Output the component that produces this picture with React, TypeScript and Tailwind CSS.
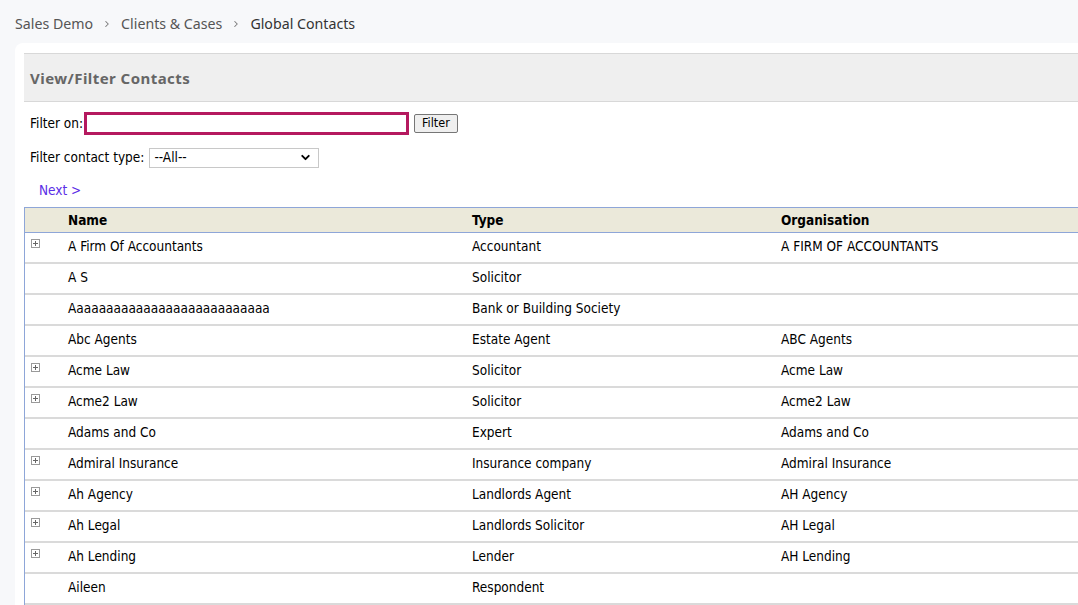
import { ChevronRight, ChevronDown } from "lucide-react";

type Contact = { name: string; type: string; org: string; expandable: boolean };

const CONTACTS: Contact[] = [
  { name: "A Firm Of Accountants", type: "Accountant", org: "A FIRM OF ACCOUNTANTS", expandable: true },
  { name: "A S", type: "Solicitor", org: "", expandable: false },
  { name: "A" + "a".repeat(26), type: "Bank or Building Society", org: "", expandable: false },
  { name: "Abc Agents", type: "Estate Agent", org: "ABC Agents", expandable: false },
  { name: "Acme Law", type: "Solicitor", org: "Acme Law", expandable: true },
  { name: "Acme2 Law", type: "Solicitor", org: "Acme2 Law", expandable: true },
  { name: "Adams and Co", type: "Expert", org: "Adams and Co", expandable: false },
  { name: "Admiral Insurance", type: "Insurance company", org: "Admiral Insurance", expandable: true },
  { name: "Ah Agency", type: "Landlords Agent", org: "AH Agency", expandable: true },
  { name: "Ah Legal", type: "Landlords Solicitor", org: "AH Legal", expandable: true },
  { name: "Ah Lending", type: "Lender", org: "AH Lending", expandable: true },
  { name: "Aileen", type: "Respondent", org: "", expandable: false },
];

const legacy = { fontFamily: 'Tahoma, "DejaVu Sans Condensed", "DejaVu Sans", sans-serif' };
const ui = { fontFamily: '"Noto Sans", "Open Sans", sans-serif' };

// little boxed plus used to open a contact's sub rows
function ExpandBox() {
  return (
    <svg width="9" height="9" viewBox="0 0 9 9" className="block">
      <rect x="0.5" y="0.5" width="8" height="8" fill="#fff" stroke="#9a9a9a" />
      <path d="M2 4.5h5M4.5 2v5" stroke="#666" strokeWidth="1" />
    </svg>
  );
}

export default function App() {
  return (
    <div className="w-[1078px] h-[605px] overflow-hidden bg-[#f7f8fa] flex flex-col">
      {/* Breadcrumb */}
      <nav className="h-[43px] shrink-0 flex items-center pl-[15px] pt-[4px] text-[14.2px] text-[#555]" style={ui}>
        <span>Sales Demo</span>
        <ChevronRight size={10} strokeWidth={2.5} className="mx-[9px] text-[#777]" />
        <span>Clients &amp; Cases</span>
        <ChevronRight size={10} strokeWidth={2.5} className="mx-[9px] text-[#777]" />
        <span className="text-[#333]">Global Contacts</span>
      </nav>

      <div className="flex-1 ml-[15px] bg-white rounded-tl-lg pl-[9px] pt-[10px] overflow-hidden">
        <div className="w-[1120px]">
          {/* Section header */}
          <div className="h-[49px] bg-[#efefef] border-y border-[#d8d8d8] flex items-center pl-[6px] pt-[2px]">
            <h1 className="text-[15px] font-bold text-[#666] tracking-[0.45px]" style={ui}>
              View/Filter Contacts
            </h1>
          </div>

          <div className="text-[13.5px] text-black" style={legacy}>
            {/* Text filter */}
            <div className="flex items-center pl-[6px] pt-[9px] h-[33px]">
              <label className="mr-[1px]">Filter on:</label>
              <input className="w-[325px] h-[23px] border-[3px] border-[#b5195f] bg-white outline-none" />
              <button className="ml-[5px] h-[19px] px-[7px] text-[12.5px] bg-[#efefef] border border-[#767676] rounded-[2px] leading-none">
                Filter
              </button>
            </div>

            {/* Type filter */}
            <div className="flex items-center pl-[6px] mt-[12px] h-[21px]">
              <label className="mr-[5px]">Filter contact type:</label>
              <div className="w-[170px] h-[20px] border border-[#c8c8c8] flex items-center justify-between pl-[4px] pr-[6px]">
                <span>--All--</span>
                <ChevronDown size={13} strokeWidth={3.5} className="text-black" />
              </div>
            </div>

            <div className="pl-[15px] mt-[12px] h-[22px] text-[#5b2ee6]">Next &gt;</div>

            {/* Contacts table */}
            <div className="mt-[5px] border-l border-[#8ea6d8]">
              <div className="h-[26px] bg-[#ebe9da] border-y border-[#8ea6d8] grid grid-cols-[43px_404px_309px_1fr] items-center font-bold">
                <div />
                <div>Name</div>
                <div>Type</div>
                <div>Organisation</div>
              </div>
              {CONTACTS.map((c) => (
                <div
                  key={c.name}
                  className="h-[31px] border-b-2 border-[#dadada] grid grid-cols-[43px_404px_309px_1fr] pt-[3px]"
                >
                  <div className="pl-[6px] pt-[3px]">{c.expandable && <ExpandBox />}</div>
                  <div>{c.name}</div>
                  <div>{c.type}</div>
                  <div>{c.org}</div>
                </div>
              ))}
            </div>
          </div>
        </div>
      </div>
    </div>
  );
}
